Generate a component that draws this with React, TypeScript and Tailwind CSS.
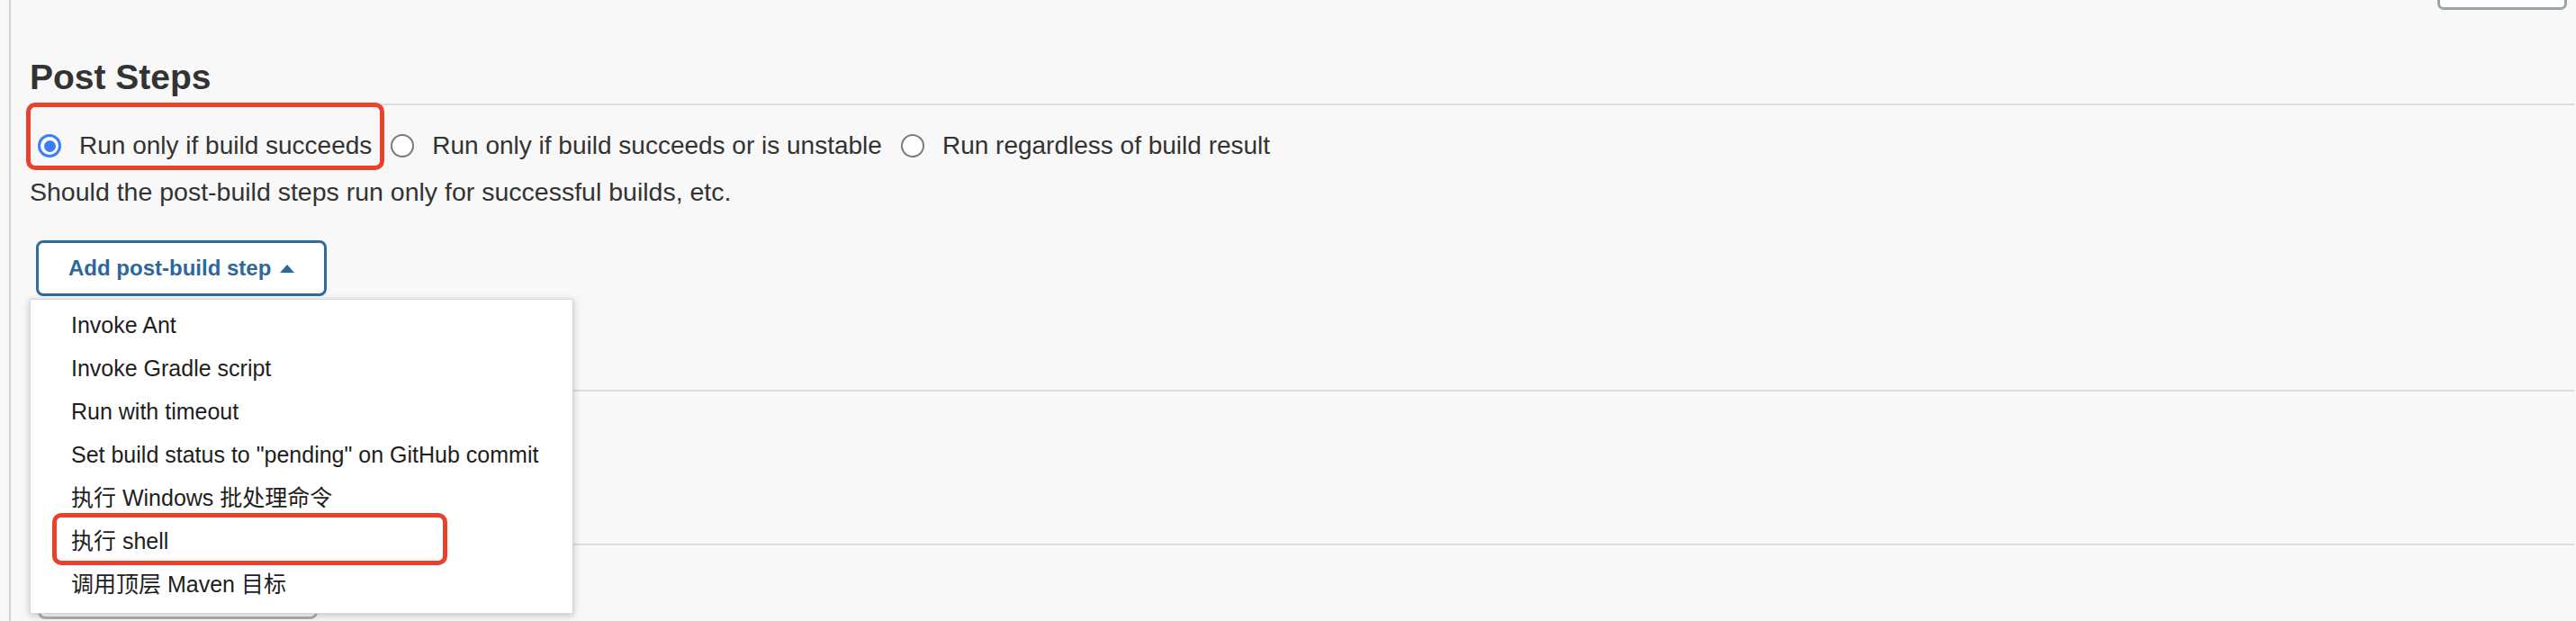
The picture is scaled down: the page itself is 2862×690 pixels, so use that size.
import React from "react";

const MENU_ITEMS = [
  "Invoke Ant",
  "Invoke Gradle script",
  "Run with timeout",
  'Set build status to "pending" on GitHub commit',
  "执行 Windows 批处理命令",
  "执行 shell",
  "调用顶层 Maven 目标",
];

const RUN_OPTIONS = [
  "Run only if build succeeds",
  "Run only if build succeeds or is unstable",
  "Run regardless of build result",
];

function Radio({ checked }: { checked: boolean }) {
  if (checked) {
    return (
      <span className="flex h-[26px] w-[26px] shrink-0 items-center justify-center rounded-full border-[3px] border-[#3a7ff6] bg-white">
        <span className="h-[13px] w-[13px] rounded-full bg-[#3a7ff6]" />
      </span>
    );
  }
  return <span className="h-[26px] w-[26px] shrink-0 rounded-full border-2 border-[#7b7b7b] bg-white" />;
}

export default function App() {
  return (
    <div className="h-[690px] w-[2862px] overflow-hidden bg-[#f8f8f8] font-['Liberation_Sans','Noto_Sans_CJK_SC',sans-serif] text-[#333]">
      <div className="ml-[10px] h-full border-l-2 border-[#d3d3d3] pl-[21px] pr-[2px]">
        {/* cut-off button from the section above */}
        <div className="flex h-[67px] justify-end">
          <div className="mr-[8px] -mt-[40px] h-[51px] w-[144px] rounded-[7px] border-[3px] border-[#9aa5ab] bg-white" />
        </div>

        <h2 className="text-[39px] font-bold leading-[38px] text-[#333]">Post Steps</h2>
        <div className="mt-[10px] h-[2px] bg-[#dcdcdc]" />

        <div className="mt-[25px] flex h-[40px] items-center gap-[21px] pl-[9px] text-[28px]">
          {RUN_OPTIONS.map((label, i) => (
            <label key={label} className="relative flex items-center gap-[20px] whitespace-nowrap">
              <Radio checked={i === 0} />
              <span>{label}</span>
              {i === 0 && (
                <span className="absolute left-[-13px] top-[-27px] h-[75px] w-[398px] rounded-[10px] border-[5px] border-[#e8412c]" />
              )}
            </label>
          ))}
        </div>

        <p className="mt-[11px] text-[28.5px] leading-[40px]">
          Should the post-build steps run only for successful builds, etc.
        </p>

        <div className="relative ml-[7px] mt-[34px] inline-block">
          <button className="flex h-[62px] items-center gap-[10px] rounded-[8px] border-[3px] border-[#2f6b9d] bg-white px-[33px] text-[24px] font-bold text-[#2d679b]">
            Add post-build step
            <svg width="16" height="9" viewBox="0 0 16 9">
              <path d="M0 9 L8 0 L16 9 Z" fill="currentColor" />
            </svg>
          </button>

          <div className="absolute left-[-7px] top-[65px] z-10 w-[604px] border border-[#d6d6d6] bg-white pb-[7px] pt-[5px] shadow-[0_2px_8px_rgba(0,0,0,0.22)]">
            {MENU_ITEMS.map((item, i) => (
              <div key={item} className="relative flex h-[48px] items-center whitespace-nowrap pl-[45px] text-[25px] text-[#1e1e1e]">
                {item}
                {i === 5 && (
                  <span className="absolute left-[24px] top-[-8px] h-[58px] w-[439px] rounded-[10px] border-[5px] border-[#e8412c]" />
                )}
              </div>
            ))}
          </div>
        </div>

        <div className="mt-[104px] h-[2px] bg-[#dcdcdc]" />
        <div className="mt-[169px] h-[2px] bg-[#dcdcdc]" />
        <div className="ml-[9px] mt-[20px] h-[62px] w-[311px] rounded-[8px] border-[3px] border-[#aab1b6] bg-white" />
      </div>
    </div>
  );
}
